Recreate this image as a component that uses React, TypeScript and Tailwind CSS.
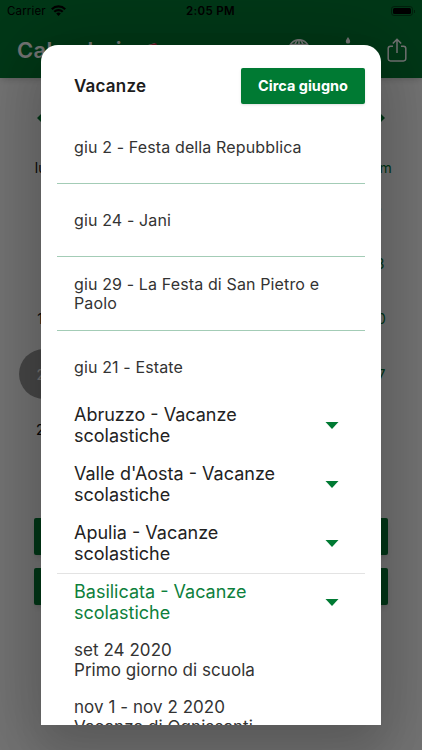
import type { ReactNode } from "react";

const weekdays = ["lun", "mar", "mer", "gio", "ven", "sab", "dom"];

const holidays = [
  "giu 2 - Festa della Repubblica",
  "giu 24 - Jani",
  "giu 29 - La Festa di San Pietro e Paolo",
];

const regions = ["Abruzzo", "Valle d'Aosta", "Apulia"];

const schoolDays = [
  { date: "set 24 2020", name: "Primo giorno di scuola" },
  { date: "nov 1 - nov 2 2020", name: "Vacanze di Ognissanti" },
];

function StatusBar() {
  return (
    <div className="relative flex h-[22px] items-center justify-between pl-[7px] pr-[7px] pt-px text-[11.5px] text-black">
      <div className="flex items-center gap-[5px]">
        <span className="tracking-[0.15px]">Carrier</span>
        <svg className="-mt-[2px]" width="15" height="11" viewBox="0 0 15 11">
          <g fill="none" stroke="black" strokeWidth="2.2">
            <path d="M0.8 4.2a9.5 9.5 0 0 1 13.4 0" />
            <path d="M3.3 6.8a6 6 0 0 1 8.4 0" />
          </g>
          <path d="M7.5 11 5.2 8.6a3.3 3.3 0 0 1 4.6 0z" />
        </svg>
      </div>
      <span className="absolute left-[186px] font-semibold tracking-[0.35px]">2:05 PM</span>
      <div className="-mt-px flex items-center gap-px">
        <div className="h-[10px] w-[22px] rounded-[3px] border border-black/40 p-px">
          <div className="h-full w-full rounded-[1.5px] bg-black" />
        </div>
        <div className="h-[3px] w-px bg-black/40" />
      </div>
    </div>
  );
}

function AppBar() {
  return (
    <div className="flex h-14 items-center pl-[17px] pr-[15px] text-white">
      <span className="text-[22px] font-semibold tracking-[0.3px]">Calendario</span>
      <svg className="ml-1" width="22" height="24" viewBox="0 0 22 24">
        <path d="M1 9 15 5l4 14L5 22z" fill="#fff" />
        <path d="M10 6.800 16 5l2 4-7 2z" fill="#e0304a" />
      </svg>
      <div className="ml-auto flex items-center">
        <svg width="24" height="24" viewBox="0 0 24 24" fill="none" stroke="currentColor" strokeWidth="1.6">
          <circle cx="12" cy="12" r="10.2" />
          <ellipse cx="12" cy="12" rx="4.8" ry="10.2" />
          <path d="M12 2v20M2 12h20M4 6.5h16M4 17.5h16" />
        </svg>
        <svg className="ml-[25px]" width="24" height="28" viewBox="0 0 24 28" fill="currentColor">
          <path d="M12 1c1.2 2 2.2 3.2 2.2 4.4a2.2 2.2 0 0 1-4.4 0C9.8 4.2 10.8 3 12 1z" />
          <path d="M11 9h2v4h-2zM4 13h16v12H4z" />
        </svg>
        <svg className="ml-[27px]" width="20" height="24" viewBox="0 0 20 24" fill="none" stroke="currentColor" strokeWidth="1.5">
          <path d="M6 8.3H3.5A2.3 2.3 0 0 0 1.2 10.6v10A2.3 2.3 0 0 0 3.5 22.9h13a2.3 2.3 0 0 0 2.3-2.3v-10a2.3 2.3 0 0 0-2.3-2.3H14" />
          <path d="M10 15V1.5M5.8 5.5 10 1.3l4.2 4.2" />
        </svg>
      </div>
    </div>
  );
}

function MonthGrid() {
  // giugno 2021 starts on a Tuesday
  const cells = Array.from({ length: 35 }, (_, i) => (i >= 1 && i <= 30 ? i : null));

  return (
    <div className="px-[17px] text-[14px]">
      <div className="flex h-[79px] items-center justify-between px-5 text-[#007a33]">
        <svg width="8" height="12" viewBox="0 0 8 12" fill="none" stroke="currentColor" strokeWidth="2.8">
          <path d="M7 1 2 6l5 5" />
        </svg>
        <svg width="8" height="12" viewBox="0 0 8 12" fill="none" stroke="currentColor" strokeWidth="2.8">
          <path d="m1 1 5 5-5 5" />
        </svg>
      </div>
      <div className="grid h-5 grid-cols-7 items-center text-center">
        {weekdays.map((day) => (
          <span key={day} className="last:text-[#007a33]">{day}</span>
        ))}
      </div>
      <div className="mt-[3px] grid auto-rows-[55.5px] grid-cols-7">
        {cells.map((day, i) => (
          <div key={i} className={`flex items-center justify-center ${i % 7 === 6 ? "text-[#007a33]" : ""}`}>
            {day === 21 ? (
              <span className="mr-[2px] flex h-[50px] w-[50px] shrink-0 items-center justify-center rounded-full bg-[#9e9e9e] text-white">
                21
              </span>
            ) : (
              day
            )}
          </div>
        ))}
      </div>
    </div>
  );
}

function ExpandRow({ region, active }: { region: string; active?: boolean }) {
  return (
    <div
      className={`flex h-[59px] justify-between pl-[17px] pr-[26px] pt-2 text-[18px] leading-[21.3px] ${
        active ? "text-[#0e7f3c] shadow-[inset_0_1px_0_#e3e3e3]" : "text-[#222]"
      }`}
    >
      <p className="w-[220px]">{region} - Vacanze scolastiche</p>
      <svg className="mt-[14px]" width="14" height="16" viewBox="0 0 14 16">
        <path d="M0.5 4h13L7 11z" fill="#007a33" />
      </svg>
    </div>
  );
}

function Dialog({ children }: { children: ReactNode }) {
  return (
    <div className="absolute inset-0 bg-black/54 px-[41px] pt-[45px]">
      <div className="h-[680px] rounded-t-[17px] shadow-[0_24px_38px_3px_rgba(0,0,0,0.1),0_9px_80px_24px_rgba(0,0,0,0.17)]">
        <div className="h-full overflow-hidden rounded-t-[17px] bg-white px-4 pt-[23px]">{children}</div>
      </div>
    </div>
  );
}

export default function App() {
  return (
    <div className="relative h-[750px] w-[422px] overflow-hidden bg-white font-['Inter','Liberation_Sans',sans-serif] text-[#111]">
      <header className="h-[78px] bg-[#007a33] shadow-md">
        <StatusBar />
        <AppBar />
      </header>
      <MonthGrid />
      <div className="mt-[60px] flex flex-col gap-[13px] px-[34px]">
        <div className="h-[37px] rounded-[2px] bg-[#007a33] shadow-md" />
        <div className="h-[37px] rounded-[2px] bg-[#007a33] shadow-md" />
      </div>

      <Dialog>
        <div className="flex h-9 items-center justify-between pl-[17px]">
          <h2 className="pt-0.5 text-[17px] font-semibold tracking-[0.2px] text-[#1c1c1c]">Vacanze</h2>
          <button className="h-9 w-[124px] rounded-[2px] bg-[#007a33] text-[14.5px] font-bold text-white shadow-sm">
            Circa giugno
          </button>
        </div>
        <div className="mt-[6px] text-[16px] leading-[19.5px] tracking-[0.13px] text-[#333]">
          {holidays.map((holiday) => (
            <div key={holiday} className="flex h-[73.5px] items-center border-b border-[#a3ccb6] pl-[17px] pr-9 pt-0.5">
              {holiday}
            </div>
          ))}
          <div className="flex h-[65.5px] items-center pl-[17px] pt-[9px]">giu 21 - Estate</div>
        </div>
        {regions.map((region) => (
          <ExpandRow key={region} region={region} />
        ))}
        <ExpandRow region="Basilicata" active />
        <div className="flex flex-col gap-4 pl-[17px] pt-[7.5px] text-[17px] leading-[20.5px] tracking-[0.05px] text-[#333]">
          {schoolDays.map(({ date, name }) => (
            <div key={date}>
              <p>{date}</p>
              <p>{name}</p>
            </div>
          ))}
        </div>
      </Dialog>
    </div>
  );
}
